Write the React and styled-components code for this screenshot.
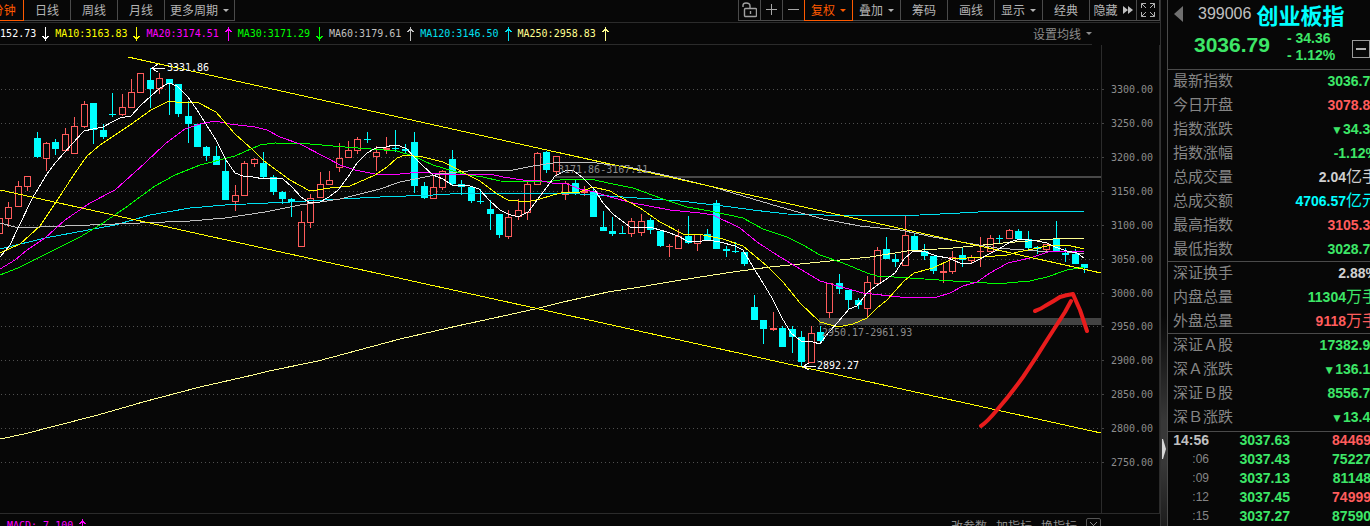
import React from "react";
import styled, { createGlobalStyle } from "styled-components";

const GlobalStyle = createGlobalStyle`
  * {
    box-sizing: border-box;
  }

  body {
    margin: 0;
    background: #070707;
    overflow: hidden;
    font-family: "Liberation Sans", "Noto Sans CJK SC", sans-serif;
  }
`;

const mono = `"DejaVu Sans Mono", "Liberation Mono", monospace`;
const cjk = `"Noto Sans CJK SC", sans-serif`;

const up = "#ff5c5c";
const down = "#00ffff";
const green = "#3de667";
const line = "#2b2b2b";

const Screen = styled.div`
  display: grid;
  grid-template-columns: minmax(0, 1fr) 8px 202px;
  height: 100vh;
  overflow: hidden;
  background: #070707;
`;

const Main = styled.main`
  min-width: 0;
  overflow: hidden;
`;

const Toolbar = styled.nav`
  display: flex;
  justify-content: space-between;
  height: 23px;
  border-bottom: 1px solid ${line};
`;

const Group = styled.div`
  display: flex;
  align-items: flex-start;
`;

/* the period list is scrolled a little to the left */
const Periods = styled(Group)`
  margin-left: -29px;
`;

const ToolButton = styled.button`
  display: flex;
  align-items: center;
  justify-content: center;
  gap: 5px;
  flex: none;
  width: ${props => props.width}px;
  height: 22px;
  margin: -1px 0 0 -1px;
  padding: 0;
  border: 1px solid ${props => (props.$active ? "#ff5a00" : "#4a4a4a")};
  background: none;
  color: ${props => (props.$active ? "#ff5a00" : "#b4b4b4")};
  font: 12px/20px ${cjk};
  white-space: nowrap;
  position: relative;
  z-index: ${props => (props.$active ? 1 : 0)};
`;

const Caret = styled.span`
  border: 3px solid transparent;
  border-top: 3px solid currentColor;
  border-bottom: 0;
`;

const Averages = styled.div`
  display: flex;
  justify-content: space-between;
  height: 22px;
  padding-right: 68px;
`;

const AverageList = styled.div`
  display: flex;
  flex: 1;
  align-items: center;
  border-bottom: 1px solid ${line};
`;

const AverageItems = styled.div`
  display: flex;
  gap: 6px;
  margin-left: -30px;
`;

const Average = styled.span`
  display: flex;
  align-items: center;
  gap: 6px;
  color: ${props => props.color};
  font: 10px/20px ${mono};
  white-space: nowrap;
`;

const SettingsButton = styled.button`
  display: flex;
  align-items: center;
  gap: 5px;
  padding: 0;
  border: 0;
  border-bottom: 1px solid ${line};
  background: none;
  color: #8c8c8c;
  font: 12px/20px ${cjk};
`;

const Chart = styled.svg`
  display: block;
  width: 100%;
  height: auto;

  text {
    font: 10px ${mono};
  }
`;

const Footer = styled.footer`
  display: flex;
  justify-content: space-between;
  height: 24px;
  padding: 0 59px 0 7px;
  border-top: 1px solid ${line};
`;

const FooterLinks = styled.div`
  display: flex;
  align-items: center;
  gap: 9px;
`;

const FooterButton = styled.button`
  padding: 0;
  border: 0;
  background: none;
  color: #8c8c8c;
  font: 12px/20px ${cjk};
`;

const CloseButton = styled.button`
  display: flex;
  align-items: center;
  justify-content: center;
  width: 15px;
  height: 15px;
  padding: 0;
  border: 1px solid #555;
  border-radius: 2px;
  background: none;
  color: #8c8c8c;
`;

const Splitter = styled.div`
  display: flex;
  align-items: center;
  justify-content: center;
  padding-top: 372px;
  border-left: 1px solid #333;
  border-right: 1px solid #4a4a4a;
  background: linear-gradient(#070707 60%, #383838 80%, #383838 88%, #1c1c1c);
`;

const Side = styled.aside`
  overflow: hidden;
`;

/* quote columns are a bit wider than the visible panel */
const SideContent = styled.div`
  width: calc(100% + 8px);
`;

const Heading = styled.header`
  display: flex;
  flex-direction: column;
  height: 69px;
`;

const NameRow = styled.div`
  display: flex;
  align-items: center;
  height: 28px;
  padding-left: 6px;
`;

const BackButton = styled.button`
  display: flex;
  padding: 0;
  margin-right: 15px;
  border: 0;
  background: none;
`;

const Code = styled.span`
  margin-right: 5px;
  color: #c0c0c0;
  font-size: 16px;
`;

const Name = styled.h1`
  margin: 0;
  color: #00ffff;
  font: bold 22px/26px ${cjk};
`;

const PriceRow = styled.div`
  display: flex;
  align-items: flex-start;
  color: ${green};
  padding-left: 26px;
`;

const Price = styled.strong`
  font-size: 21px;
  line-height: 34px;
`;

const Change = styled.div`
  flex: 1;
  padding: 2px 0 0 17px;
  font-size: 14px;
  font-weight: bold;
  line-height: 17px;
`;

const FoldButton = styled.button`
  display: flex;
  align-items: center;
  justify-content: center;
  width: 18px;
  height: 18px;
  margin: 12px 8px 0 0;
  padding: 0;
  border: 1px solid #9a9a9a;
  background: none;
`;

const Quotes = styled.table`
  width: 100%;
  border-collapse: collapse;
  box-shadow: inset 0 1px #4a4a4a;
`;

const QuoteLabel = styled.th`
  height: 24px;
  padding: 0 0 2px 5px;
  color: #858585;
  font: 15px/22px ${cjk};
  text-align: left;
`;

const QuoteValue = styled.td`
  height: 24px;
  padding: 0;
  color: ${props => props.color};
  font-size: 14px;
  font-weight: bold;
  line-height: 24px;
  text-align: right;
  white-space: nowrap;
`;

const Unit = styled.span`
  font: 16px/20px ${cjk};
`;

const Falling = styled.span`
  font-size: 12px;
  line-height: 12px;
`;

const Ticks = styled(Quotes)`
  border-top: 2px solid transparent;
`;

const TickTime = styled.th`
  width: 41px;
  height: 19px;
  padding: 0;
  color: ${props => (props.$full ? "#c0c0c0" : "#858585")};
  font-size: ${props => (props.$full ? 14 : 12)}px;
  font-weight: ${props => (props.$full ? "bold" : "normal")};
  line-height: 19px;
  text-align: right;
`;

const TickValue = styled.td`
  width: ${props => (props.width ? props.width + "px" : "auto")};
  height: 19px;
  padding: 0 7px 0 0;
  color: ${props => props.color};
  font-size: 14px;
  font-weight: bold;
  line-height: 19px;
  text-align: right;
`;

const averages = [
  ["MA5:3152.73", "#ffffff", false],
  ["MA10:3163.83", "#ffff00", false],
  ["MA20:3174.51", "#ff00ff", true],
  ["MA30:3171.29", "#00ff00", false],
  ["MA60:3179.61", "#c0c0c0", true],
  ["MA120:3146.50", "#00e0f0", true],
  ["MA250:2958.83", "#ffff90", true]
];

const axis = [
  [89, "3300.00"],
  [123, "3250.00"],
  [157, "3200.00"],
  [191, "3150.00"],
  [225, "3100.00"],
  [259, "3050.00"],
  [293, "3000.00"],
  [326, "2950.00"],
  [360, "2900.00"],
  [394, "2850.00"],
  [428, "2800.00"],
  [462, "2750.00"]
];

// body top, body bottom, wick top, wick bottom, 1 when the day closed higher
const candles = [
  [218, 234, 218, 234, 1], [207, 219, 202, 227, 1], [186, 207, 181, 207, 1],
  [176, 187, 176, 191, 1], [138, 157, 132, 158, 0], [143, 159, 142, 171, 1],
  [142, 149, 139, 155, 0], [134, 151, 128, 151, 1], [126, 154, 117, 154, 1],
  [104, 127, 101, 128, 1], [103, 130, 103, 144, 0], [130, 137, 124, 139, 0],
  [114, 115, 93, 117, 0], [107, 115, 94, 116, 1], [92, 108, 79, 108, 1],
  [73, 93, 73, 93, 1], [80, 89, 68, 108, 0], [78, 89, 73, 94, 1],
  [79, 84, 79, 115, 0], [84, 114, 84, 117, 0], [116, 124, 101, 143, 0],
  [124, 147, 124, 147, 0], [147, 156, 146, 161, 0], [156, 165, 146, 165, 0],
  [171, 200, 159, 200, 0], [195, 202, 185, 211, 1], [163, 196, 161, 196, 1],
  [159, 164, 158, 167, 1], [163, 177, 152, 179, 0], [177, 192, 175, 195, 0],
  [192, 199, 191, 204, 0], [199, 202, 198, 217, 0], [222, 247, 211, 247, 1],
  [198, 223, 194, 228, 1], [184, 198, 172, 198, 1], [180, 185, 171, 185, 1],
  [158, 168, 143, 172, 1], [150, 158, 141, 158, 1], [139, 151, 137, 154, 1],
  [139, 140, 132, 143, 0], [152, 157, 146, 171, 1], [148, 150, 137, 154, 1],
  [148, 149, 130, 152, 0], [149, 151, 144, 153, 0], [142, 186, 132, 193, 0],
  [186, 198, 182, 199, 0], [187, 199, 176, 199, 1], [171, 188, 170, 190, 1],
  [159, 184, 150, 185, 0], [184, 187, 180, 195, 0], [187, 201, 187, 203, 0],
  [201, 202, 189, 204, 0], [209, 214, 200, 230, 0], [214, 235, 214, 238, 0],
  [217, 237, 210, 239, 1], [210, 217, 199, 220, 1], [184, 213, 181, 220, 1],
  [153, 185, 152, 185, 1], [152, 170, 151, 173, 0], [156, 172, 156, 176, 1],
  [183, 195, 181, 200, 1], [183, 193, 179, 195, 0], [191, 193, 186, 196, 1],
  [191, 217, 187, 217, 0], [227, 231, 211, 231, 0], [231, 234, 217, 236, 0],
  [233, 234, 226, 234, 0], [221, 234, 218, 237, 1], [221, 233, 214, 236, 1],
  [220, 230, 218, 234, 0], [231, 246, 231, 247, 0], [246, 247, 244, 257, 1],
  [236, 249, 229, 249, 1], [236, 243, 216, 244, 0], [234, 244, 234, 251, 1],
  [234, 241, 229, 241, 0], [203, 249, 200, 249, 0], [249, 251, 246, 257, 0],
  [251, 252, 242, 253, 0], [252, 264, 252, 266, 0], [307, 320, 295, 320, 0],
  [320, 329, 320, 344, 0], [328, 330, 312, 331, 1], [328, 347, 326, 347, 0],
  [329, 337, 326, 353, 0], [337, 362, 331, 366, 0], [333, 363, 326, 363, 1],
  [332, 341, 326, 343, 0], [283, 313, 283, 318, 1], [283, 289, 274, 294, 0],
  [290, 300, 290, 310, 0], [300, 305, 298, 309, 0], [282, 309, 276, 318, 1],
  [250, 284, 247, 285, 1], [249, 259, 237, 259, 0], [259, 262, 254, 267, 0],
  [235, 266, 216, 266, 1], [236, 251, 233, 251, 0], [251, 256, 244, 260, 0],
  [256, 271, 256, 274, 0], [271, 273, 263, 283, 1], [257, 272, 251, 274, 1],
  [255, 260, 248, 267, 0], [257, 261, 255, 263, 1], [251, 252, 237, 267, 1],
  [238, 252, 235, 252, 1], [238, 239, 235, 244, 0], [230, 239, 229, 239, 1],
  [231, 239, 229, 239, 0], [239, 248, 231, 249, 0], [247, 249, 246, 254, 0],
  [244, 250, 244, 252, 1], [239, 251, 221, 251, 0], [253, 255, 248, 262, 0],
  [254, 264, 249, 264, 0], [264, 268, 264, 273, 0]
];

const curves = [
  {
    color: "#ffff90",
    points:
      "0,439 24,434 55,426 98,415 143,402 200,387 253,375 269,371 318,361 400,339 457,326 494,318 535,309 563,302 608,292 640,287 663,283 700,277 733,272 770,267 820,262 870,257 907,251 953,248 1003,243 1053,239 1084,238"
  },
  {
    color: "#00e0f0",
    points:
      "0,249 45,238 115,225 150,215 190,208 225,205 290,202 340,199 380,197 433,195 467,193 523,193 580,194 623,197 680,201 723,206 753,210 787,214 860,216 920,215 960,213 997,211 1084,211"
  },
  {
    color: "#c0c0c0",
    points:
      "0,223 15,227 40,227 140,223 190,221 225,218 265,212 300,205 340,199 380,189 400,182 440,174 477,170 513,170 533,166 560,162 590,162 633,168 673,177 713,187 753,199 787,209 823,219 860,226 900,230 933,237 967,243 997,248 1037,251 1067,252 1084,254"
  },
  {
    color: "#00ff00",
    points:
      "0,275 18,268 40,257 80,237 100,225 125,208 155,186 175,175 200,165 235,156 260,145 275,143 310,144 345,147 397,151 413,156 433,165 453,171 468,175 483,177 500,181 547,182 560,180 590,179 613,184 633,188 663,199 687,207 710,211 743,218 763,229 787,237 803,245 820,255 843,263 867,273 877,276 910,278 953,281 987,283 1007,283 1030,281 1047,277 1067,270 1084,267"
  },
  {
    color: "#ff00ff",
    points:
      "0,269 15,260 27,250 45,238 65,220 90,203 115,190 145,163 165,144 185,129 200,124 215,121 230,124 255,127 267,130 280,137 300,144 325,157 340,165 355,170 380,175 400,174 420,172 440,174 490,174 503,177 523,180 542,181 552,183 567,184 580,189 595,192 610,197 633,203 670,210 700,213 713,215 740,228 757,242 780,257 807,273 820,281 838,286 863,293 900,297 937,297 950,293 963,286 977,282 990,273 1008,263 1030,258 1048,252 1077,251 1084,252"
  },
  {
    color: "#ffff00",
    points:
      "0,253 20,244 40,226 58,199 75,173 87,156 100,145 130,125 151,110 169,101 176,102 197,102 216,112 235,134 253,150 264,161 290,180 310,191 330,188 350,186 375,175 387,167 397,158 405,155 423,157 443,162 455,168 468,175 480,181 497,194 508,200 527,202 540,199 553,195 565,192 577,193 593,187 610,191 620,197 640,208 660,222 683,234 703,235 723,239 743,246 767,266 783,282 800,303 820,322 838,327 853,324 867,318 877,308 887,300 904,281 914,273 933,268 952,259 983,257 1007,255 1018,252 1033,249 1047,246 1067,245 1084,249"
  },
  {
    color: "#ffffff",
    points:
      "0,257 10,245 18,228 33,197 47,174 56,162 72,144 84,131 93,129 103,127 112,122 120,118 131,116 141,105 151,96 160,88 169,83 177,86 188,97 197,110 216,140 226,160 235,173 243,176 253,177 264,179 275,178 283,179 292,187 301,197 310,203 320,202 329,197 338,190 348,177 357,163 367,153 376,148 386,147 393,145 400,146 407,149 413,156 423,166 433,175 443,179 452,185 470,186 479,189 490,201 500,210 508,214 518,217 528,212 538,199 547,187 555,176 567,170 574,171 583,178 595,190 603,203 613,214 630,227 653,228 667,232 678,236 687,241 697,242 708,240 720,242 735,246 743,250 753,267 763,283 772,298 782,318 791,333 801,341 813,342 820,344 829,332 838,322 849,309 857,306 867,293 876,286 885,280 895,273 904,259 912,252 923,251 937,256 948,258 960,263 972,263 980,259 989,254 999,249 1010,242 1020,239 1037,241 1047,243 1055,247 1067,251 1077,253 1084,258"
  },
  { color: "#ffff00", points: "128,57 1101,273" },
  { color: "#ffff00", points: "0,190 1101,433" }
];

const quoteGroups = [
  [
    ["最新指数", "3036.79", green],
    ["今日开盘", "3078.80", up],
    ["指数涨跌", "34.36", green, "", true],
    ["指数涨幅", "-1.12%", green],
    ["总成交量", "2.04", "#d0d0d0", "亿手"],
    ["总成交额", "4706.57", "#00ffff", "亿元"],
    ["最高指数", "3105.30", up],
    ["最低指数", "3028.70", green]
  ],
  [
    ["深证换手", "2.88%", "#d0d0d0"],
    ["内盘总量", "11304", green, "万手"],
    ["外盘总量", "9118", up, "万手"]
  ],
  [
    ["深证Ａ股", "17382.90", green],
    ["深Ａ涨跌", "136.10", green, "", true],
    ["深证Ｂ股", "8556.70", green],
    ["深Ｂ涨跌", "13.40", green, "", true]
  ]
];

const ticks = [
  ["14:56", "3037.63", "84469", up],
  [":06", "3037.43", "75227", green],
  [":09", "3037.13", "81148", green],
  [":12", "3037.45", "74999", up],
  [":15", "3037.27", "87590", green]
];

const Arrow = ({ rising }) => (
  <svg width="7" height="14" viewBox="0 0 7 14" shapeRendering="crispEdges">
    <g
      fill="none"
      stroke="currentColor"
      transform={rising ? undefined : "rotate(180 3.5 7)"}
    >
      <path d="M3.5 0V14M2 2.5H5M1 3.5H6M0 4.5H2M5 4.5H7" />
    </g>
  </svg>
);

const LockIcon = () => (
  <svg width="15" height="16" viewBox="0 0 15 16" fill="none" stroke="#a0a0a0">
    <rect x="2.5" y="6.5" width="12" height="8" rx="1" strokeWidth="1.4" />
    <path d="M1 5V3.5Q1 1 4 1Q8 1 8 4V6.5" strokeWidth="1.4" />
    <path d="M8.500 9V12" strokeWidth="1.4" />
  </svg>
);

const PlusIcon = () => (
  <svg width="12" height="12" stroke="#a8a8a8" shapeRendering="crispEdges">
    <path d="M0 5.500H11M5.500 0V11" />
  </svg>
);

const MinusIcon = () => (
  <svg width="12" height="12" stroke="#a8a8a8" shapeRendering="crispEdges">
    <path d="M0 5.500H11" />
  </svg>
);

const ForwardIcon = () => (
  <svg width="10" height="8" fill="#c0c0c0">
    <path d="M0 0L5 4L0 8ZM5 0L10 4L5 8Z" />
  </svg>
);

const ExpandIcon = () => (
  <svg width="14" height="14" fill="none" stroke="#b4b4b4">
    <path d="M5 .5H.5V5M.5 .5L5 5M9 .5H13.500V5M13.500 .5L9 5M5 13.500H.5V9M.5 13.500L5 9M9 13.500H13.500V9M13.500 13.500L9 9" />
  </svg>
);

const Candle = ({ index, data }) => {
  const [top, bottom, high, low, rising] = data;
  const x = Math.floor(9.4386 * index - 0.69);
  const color = rising ? up : down;
  const solid = !rising || bottom - top < 3;
  return (
    <g>
      <rect x={x} y={high} width="1" height={low - high} fill={color} />
      {solid ? (
        <rect x={x - 3} y={top} width="7" height={bottom - top} fill={color} />
      ) : (
        <rect
          x={x - 2.5}
          y={top + 0.5}
          width="6"
          height={bottom - top - 1}
          fill="#070707"
          stroke={color}
        />
      )}
    </g>
  );
};

const PriceChart = () => (
  <Chart viewBox="0 45 1160 468" role="img" aria-label="K线图">
    <g shapeRendering="crispEdges">
      {axis.map(([y]) => (
        <path
          key={y}
          d={`M1 ${y + 0.5}H1101`}
          stroke="#505050"
          strokeDasharray="1 3"
        />
      ))}
      {axis.map(([y]) => (
        <path key={y} d={`M1101 ${y + 0.5}H1104`} stroke="#444" />
      ))}
      <path d="M1101.500 45V513M1159.500 45V513" stroke="#2b2b2b" />
      <rect x="555" y="176" width="546" height="2" fill="#484848" />
      {candles.map((data, i) => (
        <Candle key={i} index={i} data={data} />
      ))}
      <rect
        x="819"
        y="318"
        width="282"
        height="7"
        fill="#808080"
        fillOpacity="0.5"
      />
      {curves.map(curve => (
        <polyline
          key={curve.points}
          points={curve.points}
          fill="none"
          stroke={curve.color}
        />
      ))}
      <path d="M152 68.500H165M158 64L152 68.500L158 72" fill="none" stroke="#fff" />
      <path d="M803 366.500H816M809 363L803 366.500L809 370" fill="none" stroke="#fff" />
    </g>
    <g fill="#8c8c8c">
      <text x="558" y="173">3171.86-3167.11</text>
      <text x="822" y="336">2950.17-2961.93</text>
      {axis.map(([y, label]) => (
        <text key={y} x="1111" y={y + 4}>
          {label}
        </text>
      ))}
    </g>
    <g fill="#fff">
      <text x="167" y="71">3331.86</text>
      <text x="817" y="369">2892.27</text>
    </g>
    <path
      d="M981 426Q987 422 997 410Q1010 395 1023 377Q1036 358 1047 340L1065 312L1071 301M1035 311Q1041 309 1045 306Q1054 301 1060 297Q1066 295 1073 294Q1075 299 1080 310L1087 331"
      fill="none"
      stroke="#e81c1c"
      strokeWidth="4"
      strokeLinecap="round"
      strokeLinejoin="round"
    />
  </Chart>
);

const App = () => (
  <Screen>
    <GlobalStyle />
    <Main>
      <Toolbar>
        <Periods>
          <ToolButton width={54} $active>60分钟</ToolButton>
          <ToolButton width={48}>日线</ToolButton>
          <ToolButton width={48}>周线</ToolButton>
          <ToolButton width={48}>月线</ToolButton>
          <ToolButton width={71}>
            更多周期 <Caret />
          </ToolButton>
        </Periods>
        <Group>
          <ToolButton width={23} aria-label="锁定">
            <LockIcon />
          </ToolButton>
          <ToolButton width={23} aria-label="放大">
            <PlusIcon />
          </ToolButton>
          <ToolButton width={23} aria-label="缩小">
            <MinusIcon />
          </ToolButton>
          <ToolButton width={49} $active>
            复权 <Caret />
          </ToolButton>
          <ToolButton width={49}>
            叠加 <Caret />
          </ToolButton>
          <ToolButton width={48}>筹码</ToolButton>
          <ToolButton width={48}>画线</ToolButton>
          <ToolButton width={49}>
            显示 <Caret />
          </ToolButton>
          <ToolButton width={48}>经典</ToolButton>
          <ToolButton width={48}>
            隐藏 <ForwardIcon />
          </ToolButton>
          <ToolButton width={24} aria-label="全屏">
            <ExpandIcon />
          </ToolButton>
        </Group>
      </Toolbar>
      <Averages>
        <AverageList>
          <AverageItems>
            {averages.map(([label, color, rising]) => (
              <Average key={label} color={color}>
                {label}
                <Arrow rising={rising} />
              </Average>
            ))}
          </AverageItems>
        </AverageList>
        <SettingsButton>
          设置均线 <Caret />
        </SettingsButton>
      </Averages>
      <PriceChart />
      <Footer>
        <Average color="#ff00ff">
          MACD:-7.100
          <Arrow rising />
        </Average>
        <FooterLinks>
          <FooterButton>改参数</FooterButton>
          <FooterButton>加指标</FooterButton>
          <FooterButton>换指标</FooterButton>
          <CloseButton aria-label="关闭">
            <svg width="9" height="9" stroke="currentColor">
              <path d="M1 1L8 8M8 1L1 8" />
            </svg>
          </CloseButton>
        </FooterLinks>
      </Footer>
    </Main>
    <Splitter>
      <svg width="4" height="20" fill="#d8d8d8">
        <path d="M0 0L1 0L4 10L1 20L0 20Z" />
      </svg>
    </Splitter>
    <Side>
      <SideContent>
        <Heading>
          <NameRow>
            <BackButton aria-label="上一个">
              <svg width="9" height="16" fill="#707070">
                <path d="M9 0V16L0 8Z" />
              </svg>
            </BackButton>
            <Code>399006</Code>
            <Name>创业板指</Name>
          </NameRow>
          <PriceRow>
            <Price>3036.79</Price>
            <Change>
              <div>- 34.36</div>
              <div>- 1.12%</div>
            </Change>
            <FoldButton aria-label="收起">
              <svg width="10" height="2">
                <rect width="10" height="2" fill="#b0b0b0" />
              </svg>
            </FoldButton>
          </PriceRow>
        </Heading>
        {quoteGroups.map(group => (
          <Quotes key={group[0][0]}>
            <tbody>
              {group.map(([label, value, color, unit, falling]) => (
                <tr key={label}>
                  <QuoteLabel scope="row">{label}</QuoteLabel>
                  <QuoteValue color={color}>
                    {falling && <Falling>▼</Falling>}
                    {value}
                    {unit && <Unit>{unit}</Unit>}
                  </QuoteValue>
                </tr>
              ))}
            </tbody>
          </Quotes>
        ))}
        <Ticks>
          <tbody>
            {ticks.map(([time, price, volume, color], i) => (
              <tr key={time}>
                <TickTime scope="row" $full={i === 0}>
                  {time}
                </TickTime>
                <TickValue color={green} width={88}>
                  {price}
                </TickValue>
                <TickValue color={color}>{volume}</TickValue>
              </tr>
            ))}
          </tbody>
        </Ticks>
      </SideContent>
    </Side>
  </Screen>
);

export default App;
